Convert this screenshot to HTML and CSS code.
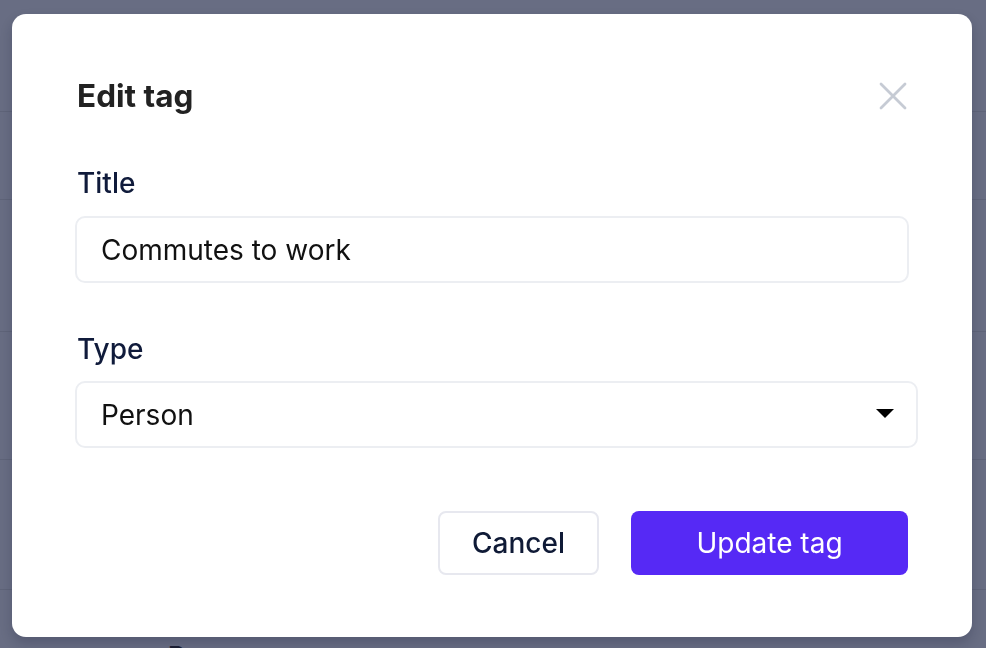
FILE: index.html
```html
<!DOCTYPE html>
<html lang="en">
<head>
<meta charset="utf-8">
<title>Edit tag</title>
<link rel="stylesheet" href="styles.css">
</head>
<body>
<div class="page">
  <div class="row r1"></div>
  <div class="row r2"></div>
  <div class="row r3"></div>
  <div class="row r4"></div>
  <div class="row r5"></div>
  <div class="row r6"><span class="bgtext">Person</span></div>
</div>
<div class="overlay">
  <div class="modal">
    <div class="modal-head">
      <h2 class="modal-title">Edit tag</h2>
      <button class="close" aria-label="Close">
        <svg width="28" height="28" viewBox="0 0 28 28"><path d="M2 2 L26 26 M26 2 L2 26" stroke="#c6cbd4" stroke-width="2.8" stroke-linecap="round" fill="none"/></svg>
      </button>
    </div>
    <label class="label label-title">Title</label>
    <input class="field" type="text" value="Commutes to work">
    <label class="label label-type">Type</label>
    <div class="select-wrap">
      <select class="field select"><option>Person</option></select>
      <svg class="caret" width="18" height="10" viewBox="0 0 18 10"><path d="M0 0 H18 L9 9 Z" fill="#000"/></svg>
    </div>
    <div class="actions">
      <button class="btn btn-cancel">Cancel</button>
      <button class="btn btn-primary">Update tag</button>
    </div>
  </div>
</div>
</body>
</html>
```
FILE: styles.css
```css
* { box-sizing: border-box; }
html, body { margin: 0; padding: 0; }
body {
  width: 986px;
  height: 648px;
  overflow: hidden;
  background: #686d83;
  font-family: Inter, "Noto Sans", sans-serif;
}
.page { display: flex; flex-direction: column; }
.row { border-bottom: 1px solid #5f6479; }
.r1 { height: 112px; }
.r2 { height: 88px; }
.r3 { height: 132px; }
.r4 { height: 128px; }
.r5 { height: 130px; }
.r6 { height: 80px; border-bottom: none; padding: 50px 0 0 168px; }
.bgtext { color: #1c1f33; font-size: 26px; font-weight: 600; }

.overlay {
  position: fixed;
  inset: 0;
  padding: 14px 0 0 12px;
  display: flex;
  align-items: flex-start;
}
.modal {
  width: 960px;
  height: 623px;
  background: #fff;
  border-radius: 14px;
  padding: 64px 64px 0 64px;
  display: flex;
  flex-direction: column;
  box-shadow: 0 6px 12px rgba(20, 22, 50, 0.22);
}
.modal-head {
  display: flex;
  align-items: center;
  justify-content: space-between;
  height: 36px;
}
.modal-title {
  margin: 0 0 0 1px;
  font-size: 31.5px;
  font-weight: 700;
  color: #222222;
  line-height: 36px;
}
.close {
  border: 0;
  background: none;
  padding: 0;
  margin-right: 1px;
  width: 28px;
  height: 28px;
  display: flex;
}
.label {
  display: block;
  font-size: 28px;
  font-weight: 500;
  color: #101b3b;
  line-height: 36px;
  margin-left: 1px;
}
.label-title { margin-top: 51px; }
.label-type { margin-top: 48px; }
.field {
  margin-top: 15px;
  height: 67px;
  width: 834px;
  border: 2px solid #eceef2;
  border-radius: 10px;
  padding: 0 24px;
  font-family: Inter, "Noto Sans", sans-serif;
  font-size: 28px;
  color: #111111;
  background: #fff;
  outline: none;
}
input.field { margin-left: -1px; }
.select-wrap {
  position: relative;
  margin-top: 14px;
  margin-left: -1px;
  width: 843px;
}
.select {
  margin-top: 0;
  width: 843px;
  appearance: none;
  -webkit-appearance: none;
}
.caret {
  position: absolute;
  right: 24px;
  top: 28px;
}
.actions {
  margin-top: 63px;
  display: flex;
  justify-content: flex-end;
  gap: 32px;
}
.btn {
  height: 64px;
  border-radius: 8px;
  font-family: Inter, "Noto Sans", sans-serif;
  font-size: 28px;
  font-weight: 500;
}
.btn-cancel {
  width: 161px;
  background: #fff;
  border: 2px solid #e7e8ef;
  color: #0f1a36;
}
.btn-primary {
  width: 277px;
  background: #5629f5;
  border: 0;
  color: #fff;
  font-weight: 400;
}
```
